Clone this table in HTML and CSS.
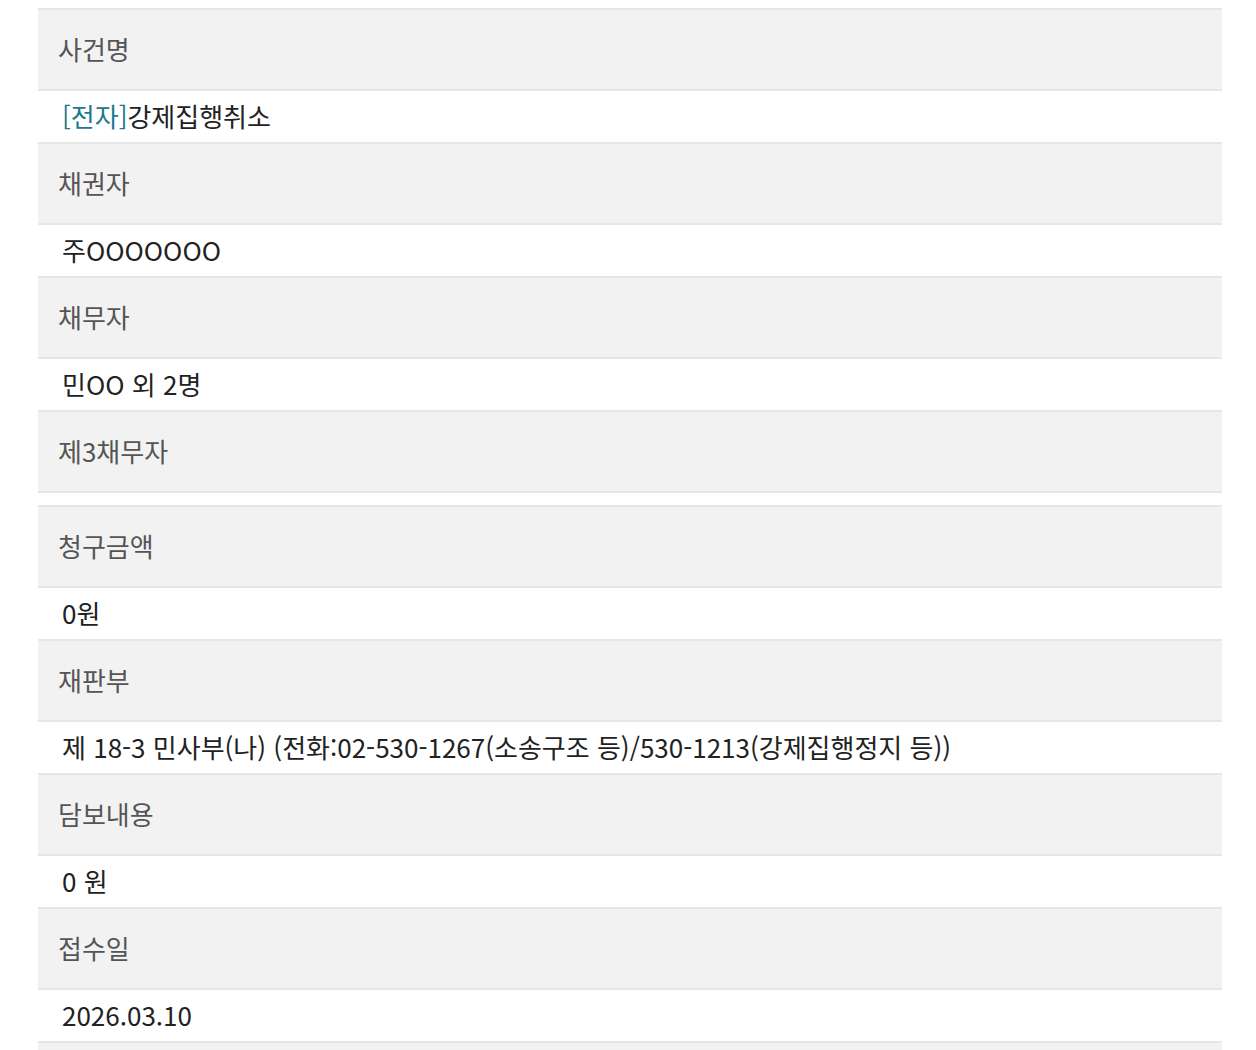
FILE: index.html
```html
<!DOCTYPE html>
<html lang="ko">
<head>
<meta charset="utf-8">
<link rel="stylesheet" href="styles.css">
</head>
<body>
<dl class="info">
  <dt class="label">사건명</dt>
  <dd class="value"><span class="tag">[전자]</span>강제집행취소</dd>
  <dt class="label">채권자</dt>
  <dd class="value">주OOOOOOO</dd>
  <dt class="label">채무자</dt>
  <dd class="value">민OO 외 2명</dd>
  <dt class="label">제3채무자</dt>
  <dd class="value empty"></dd>
  <dt class="label">청구금액</dt>
  <dd class="value">0원</dd>
  <dt class="label">재판부</dt>
  <dd class="value">제 18-3 민사부(나) (전화:02-530-1267(소송구조 등)/530-1213(강제집행정지 등))</dd>
  <dt class="label">담보내용</dt>
  <dd class="value">0 원</dd>
  <dt class="label">접수일</dt>
  <dd class="value">2026.03.10</dd>
  <dt class="label"></dt>
</dl>
</body>
</html>
```

FILE: styles.css
```css
html, body {
  margin: 0;
  padding: 0;
  background: #fff;
}
body {
  padding: 8px 34px 0 38px;
  font-family: "Noto Sans CJK KR", "Noto Sans", sans-serif;
}
.info {
  margin: 0;
  border-top: 2px solid #e6e6e6;
}
.label {
  margin: 0;
  background: #f2f2f2;
  color: #555;
  font-size: 26px;
  line-height: 77px;
  height: 77px;
  padding: 0 0 2px 20px;
  border-bottom: 2px solid #e6e6e6;
}
.value {
  margin: 0;
  background: #fff;
  color: #222;
  font-size: 26px;
  line-height: 39px;
  padding: 5px 0 7px 24px;
  border-bottom: 2px solid #e6e6e6;
}
.value.empty {
  line-height: 0;
}
.tag {
  color: #1b7a8c;
}
```
